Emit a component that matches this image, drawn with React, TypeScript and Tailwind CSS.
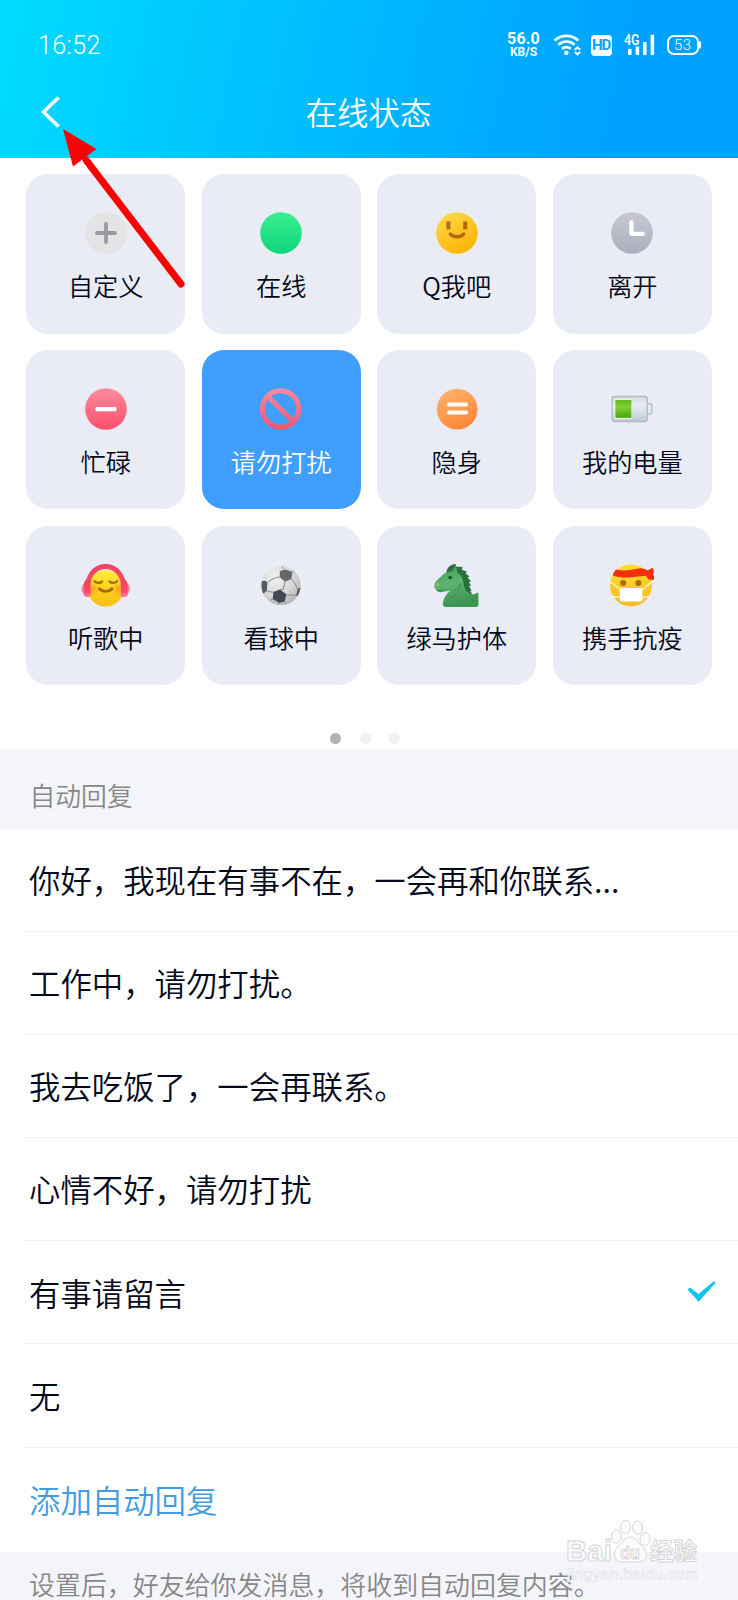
import React from 'react';

type Status = {
  label: string;
  icon: React.ReactNode;
  active?: boolean;
};

const AddIcon = () => (
  <svg width="48" height="48" viewBox="0 0 48 48">
    <circle cx="24" cy="24" r="21" fill="#e4e4e6" />
    <path d="M24 15v18M15 24h18" stroke="#9b9b9f" strokeWidth="3.8" strokeLinecap="round" />
  </svg>
);

const OnlineIcon = () => (
  <svg width="48" height="48" viewBox="0 0 48 48">
    <defs>
      <linearGradient id="online" x1="0" y1="0" x2="0" y2="1">
        <stop offset="0" stopColor="#38ee8e" />
        <stop offset="1" stopColor="#10d67c" />
      </linearGradient>
    </defs>
    <circle cx="24" cy="24" r="20.8" fill="url(#online)" />
  </svg>
);

const SmileIcon = () => (
  <svg width="48" height="48" viewBox="0 0 48 48">
    <defs>
      <linearGradient id="smile" x1="0.2" y1="0" x2="0.7" y2="1">
        <stop offset="0" stopColor="#ffd84a" />
        <stop offset="1" stopColor="#fdb300" />
      </linearGradient>
    </defs>
    <circle cx="24" cy="24" r="20.8" fill="url(#smile)" />
    <path d="M15.4 14.6v3.8M32.2 14.6v3.8" stroke="#b5690c" strokeWidth="4" strokeLinecap="square" />
    <path d="M17.4 25c3.4 3.600 10 3.600 13.400 0" fill="none" stroke="#b5690c" strokeWidth="3.4" strokeLinecap="round" />
  </svg>
);

const AwayIcon = () => (
  <svg width="48" height="48" viewBox="0 0 48 48">
    <defs>
      <linearGradient id="away" x1="0" y1="0" x2="0" y2="1">
        <stop offset="0" stopColor="#c6c7d3" />
        <stop offset="1" stopColor="#aeafbe" />
      </linearGradient>
    </defs>
    <circle cx="24" cy="24" r="20.8" fill="url(#away)" />
    <path d="M23.4 13v11.8h11.4" fill="none" stroke="#fff" strokeWidth="4.2" strokeLinecap="round" strokeLinejoin="round" />
  </svg>
);

const BusyIcon = () => (
  <svg width="48" height="48" viewBox="0 0 48 48">
    <defs>
      <linearGradient id="busy" x1="0" y1="0" x2="0" y2="1">
        <stop offset="0" stopColor="#ff8b9c" />
        <stop offset="1" stopColor="#fc4f6d" />
      </linearGradient>
    </defs>
    <circle cx="24" cy="24" r="20.8" fill="url(#busy)" />
    <rect x="13.5" y="22" width="21" height="4.2" rx="1" fill="#fff" />
  </svg>
);

const BlockIcon = () => (
  <svg width="48" height="48" viewBox="0 0 48 48">
    <defs>
      <linearGradient id="block" gradientUnits="userSpaceOnUse" x1="24" y1="3" x2="24" y2="45">
        <stop offset="0" stopColor="#f98d9f" />
        <stop offset="1" stopColor="#ef5473" />
      </linearGradient>
    </defs>
    <circle cx="23.6" cy="24" r="18.2" fill="none" stroke="url(#block)" strokeWidth="5" />
    <path d="M11 11.4l25.2 25.2" stroke="url(#block)" strokeWidth="5" />
  </svg>
);

const HiddenIcon = () => (
  <svg width="48" height="48" viewBox="0 0 48 48">
    <defs>
      <linearGradient id="hidden" x1="0.2" y1="0" x2="0.7" y2="1">
        <stop offset="0" stopColor="#ffb56b" />
        <stop offset="1" stopColor="#fc8436" />
      </linearGradient>
    </defs>
    <circle cx="24.2" cy="24.2" r="20.4" fill="url(#hidden)" />
    <path d="M16 19.6h17M16 27.6h17" stroke="#fff" strokeWidth="4" strokeLinecap="round" />
  </svg>
);

const PowerIcon = () => (
  <svg width="48" height="48" viewBox="0 0 48 48">
    <defs>
      <linearGradient id="shell" x1="0" y1="0" x2="0" y2="1">
        <stop offset="0" stopColor="#d3dbe0" />
        <stop offset="0.35" stopColor="#e6eef3" />
        <stop offset="1" stopColor="#bccad2" />
      </linearGradient>
      <linearGradient id="charge" x1="0" y1="0" x2="0" y2="1">
        <stop offset="0" stopColor="#5dbb1b" />
        <stop offset="0.4" stopColor="#83cf36" />
        <stop offset="1" stopColor="#43a60a" />
      </linearGradient>
    </defs>
    <rect x="38.600" y="18.600" width="5.400" height="10.600" rx="2.600" fill="#e4e8ed" stroke="#bcc1c6" strokeWidth="1.500" />
    <rect x="4" y="11.5" width="35.2" height="25" rx="2.6" fill="url(#shell)" stroke="#b1babf" strokeWidth="1.3" />
    <rect x="6.400" y="13.8" width="17.6" height="20.4" fill="#e8f3e2" />
    <rect x="7.400" y="15" width="16" height="17.8" fill="url(#charge)" />
  </svg>
);

const MusicIcon = () => (
  <svg width="52" height="48" viewBox="0 0 52 48">
    <defs>
      <linearGradient id="music" x1="0.5" y1="0" x2="0.5" y2="1">
        <stop offset="0" stopColor="#ffee3b" />
        <stop offset="0.65" stopColor="#fdc91a" />
        <stop offset="1" stopColor="#fbbf1a" />
      </linearGradient>
      <linearGradient id="phones" x1="0" y1="0" x2="0" y2="1">
        <stop offset="0" stopColor="#ee4260" />
        <stop offset="0.7" stopColor="#fb4a68" />
        <stop offset="1" stopColor="#ff8698" />
      </linearGradient>
      <radialGradient id="blush">
        <stop offset="0" stopColor="#ff8b20" stopOpacity="0.75" />
        <stop offset="1" stopColor="#ff8b20" stopOpacity="0" />
      </radialGradient>
    </defs>
    <circle cx="25.6" cy="27.400" r="18.2" fill="url(#music)" />
    <circle cx="12.5" cy="28" r="7" fill="url(#blush)" />
    <circle cx="39" cy="28" r="7" fill="url(#blush)" />
    <path d="M5 23C8 9 16 3 25.600 3S43.200 9 46.200 23l-5 1C39.500 13 33 8 25.600 8S11.700 13 10 24z" fill="url(#phones)" />
    <path d="M4 22.500c-1.800 1-2.600 3-2.600 5 0 2.300.8 4.300 2.400 5.600zM47.400 22.500c1.800 1 2.600 3 2.600 5 0 2.300-.8 4.300-2.400 5.600z" fill="#f68a9c" />
    <path d="M3.600 24c.5-3 1.800-5 3.300-5.400H10.600V36H7c-2 0-3.400-1-3.400-3zM47.800 24c-.5-3-1.800-5-3.300-5.400h-3.700V36h3.600c2 0 3.400-1 3.400-3z" fill="url(#phones)" />
    <path d="M14.500 20.200c2 2.200 5.800 2.200 7.600.2M29.500 20.400c1.800 2 5.600 2 7.600-.2" fill="none" stroke="#a8690b" strokeWidth="2.3" strokeLinecap="round" />
    <path d="M19.400 27.800c3 3.400 9.600 3.400 12.600 0" fill="none" stroke="#a8690b" strokeWidth="2.800" strokeLinecap="round" />
  </svg>
);

const BallIcon = () => (
  <svg width="48" height="48" viewBox="0 0 48 48">
    <defs>
      <radialGradient id="ball" cx="0.35" cy="0.3" r="0.75">
        <stop offset="0" stopColor="#f1f1f1" />
        <stop offset="0.6" stopColor="#d8d8d9" />
        <stop offset="1" stopColor="#b5b5b6" />
      </radialGradient>
      <clipPath id="ballClip">
        <circle cx="24" cy="24.600" r="19.600" />
      </clipPath>
    </defs>
    <circle cx="24" cy="24.600" r="19.600" fill="url(#ball)" />
    <g clipPath="url(#ballClip)">
      <path d="M22.800 10l5.600-1.600 7 2.400-1 7.200-6.400 2.800-5.200-4.600z" fill="#65686c" />
      <path d="M16.400 31l6.600-2.600 6.400 5.200-1.800 7-5.600 1.400-6.200-4z" fill="#434953" />
      <path d="M3 20.400l5.400-.6 2 2-.6 8-3 2.600-4-2zM44 26.600l-3.400 1.400-1.400 6.600 2.400.8 3-4z" fill="#555a60" />
      <path d="M10.400 21.400c4-3 7-5 12.400-5.400M28 20.800l-1.800 7.600-3.200.4M34.400 18.200c3 3 5 6 6 10M29.400 33.800l10 .6M9.800 29.800c1 .4 3 1 6.600 1.400M16 38l-3 1.400M27.600 40.400l2 4M21.600 42l-1 3" fill="none" stroke="#85878a" strokeWidth="1" />
    </g>
    <path d="M24.600 5l2.600 3.600M37 9.600l-2 2M16 42l2-2.600" stroke="#97999d" strokeWidth="1" />
  </svg>
);

const HorseIcon = () => (
  <svg width="48" height="48" viewBox="0 0 48 48">
    <defs>
      <linearGradient id="horse" x1="0" y1="0" x2="0.3" y2="1">
        <stop offset="0" stopColor="#3fa054" />
        <stop offset="0.5" stopColor="#5db370" />
        <stop offset="1" stopColor="#3b954f" />
      </linearGradient>
    </defs>
    <path d="M13 12.500C14 6.500 17.500 3 23 3l-.5 2.500L29.500 6l-.6 2.800 5 1.700-1.300 1.900 4 3.200-2.200.9 3.800 3.800-2.400.8 2.400 4.200-2.400-.4 2.800 4.600-1.400.5 2.200 3.500L33 36 21 21z" fill="#296f3c" />
    <path d="M18.600 10.400l3.600-5.400c1.800 2 2 4 1.700 6.200 4.600 3 6.100 6.300 6.600 10.800.8 6.500 4 11 9.500 11.400l5.400-2v12.200c0 1.600-.8 2.400-2.400 2.400H12.800c-2.200 0-3.200-1.200-3-3.200.5-5.500 3-9.500 7.200-13-3.500.5-5.400 1-8.400 1.400C4.400 31.500 1.400 28.500 1.400 24.800c0-3 1.600-4.800 4.400-7.200 3.600-3.400 6.200-7.400 12.800-7.200z" fill="url(#horse)" />
    <path d="M20 30.500c4-1.800 6.500-4.500 7-8 .6 6-2.500 10.500-9 13.800-3 1.600-4.800 5.200-5.600 9.400" fill="none" stroke="#2f8444" strokeWidth="1" opacity="0.500" />
    <ellipse cx="17.200" cy="16.600" rx="2" ry="1.700" fill="#165b29" />
    <ellipse cx="4.800" cy="23.600" rx="1.200" ry="1.700" fill="#a5c85c" />
    <path d="M4.500 29.500c2 .8 4 .4 5.500-.8" fill="none" stroke="#226e37" strokeWidth="1" />
  </svg>
);

const MaskIcon = () => (
  <svg width="48" height="48" viewBox="0 0 48 48">
    <defs>
      <linearGradient id="mask" x1="0" y1="0" x2="0" y2="1">
        <stop offset="0" stopColor="#fddd2e" />
        <stop offset="1" stopColor="#f8bb26" />
      </linearGradient>
    </defs>
    <circle cx="23" cy="24.400" r="21" fill="url(#mask)" />
    <path d="M4.800 14.500c.6-2.500 1.800-4.500 3.400-5.900C17 11 25 8 31 7.400c3.600-.4 6.400.6 8.600 2.200l4.800-2.800c2 2.400 2 4.600.8 6.400 1 2 1.300 3.800.4 6l-5-.8-2.800-3.600C27 15.500 16 18.500 4.800 14.500z" fill="#f32f10" />
    <path d="M1.500 20.200l12 9M45.500 19.500l-11.800 9.700M3 35.800l10 .4M43.400 35.200l-9.400 1.400" stroke="#fff6dc" strokeWidth="1.400" />
    <circle cx="15.200" cy="22" r="3" fill="#a86b08" />
    <circle cx="30.400" cy="22" r="3" fill="#a86b08" />
    <rect x="11.800" y="27" width="22.600" height="13.400" rx="1.600" fill="#fff" />
  </svg>
);

const statuses: Status[] = [
  { label: '自定义', icon: <AddIcon /> },
  { label: '在线', icon: <OnlineIcon /> },
  { label: 'Q我吧', icon: <SmileIcon /> },
  { label: '离开', icon: <AwayIcon /> },
  { label: '忙碌', icon: <BusyIcon /> },
  { label: '请勿打扰', icon: <BlockIcon />, active: true },
  { label: '隐身', icon: <HiddenIcon /> },
  { label: '我的电量', icon: <PowerIcon /> },
  { label: '听歌中', icon: <MusicIcon /> },
  { label: '看球中', icon: <BallIcon /> },
  { label: '绿马护体', icon: <HorseIcon /> },
  { label: '携手抗疫', icon: <MaskIcon /> },
];

const replies = [
  '你好，我现在有事不在，一会再和你联系...',
  '工作中，请勿打扰。',
  '我去吃饭了，一会再联系。',
  '心情不好，请勿打扰',
  '有事请留言',
  '无',
];

const StatusBar = () => (
  <div className="flex h-[90px] items-center pl-[38px] pr-[37px] text-white">
    <span className="font-[Roboto] text-[25px] leading-none tracking-[0.4px]">16:52</span>
    <div className="ml-auto flex items-center">
      <div className="flex w-[34px] flex-col items-center font-[Roboto] font-bold">
        <span className="text-[16px] leading-[14px] tracking-[0.2px]">56.0</span>
        <span className="text-[12px] leading-[12px]">KB/S</span>
      </div>
      <svg className="ml-[12px]" width="28" height="22" viewBox="0 0 28 22" fill="none" stroke="#fff" strokeWidth="2.800">
        <path d="M1.500 6.500c7-6.200 16.800-6.200 23.800 0M5.200 10.800c5-4.200 11.400-4.200 16.400 0M9 14.800c2.800-2.200 6-2.200 8.800 0" />
        <circle cx="13.400" cy="18.800" r="2.200" fill="#fff" stroke="none" />
        <path d="M21.800 15.800l2.700-2.600 2.700 2.600M21.800 17.800l2.700 2.600 2.700-2.600" strokeWidth="1.900" />
      </svg>
      <div className="ml-[10px] flex size-[21px] items-center justify-center rounded-[4px] bg-white">
        <span className="font-[Roboto] text-[15px] font-bold leading-none tracking-[-1.200px] text-[#00a6fb]">HD</span>
      </div>
      <svg className="ml-[12px]" width="31" height="22" viewBox="0 0 31 22" fill="#fff">
        <text x="0" y="10.800" fontSize="14" fontWeight="500" fontFamily="Roboto, sans-serif" textLength="15.500" lengthAdjust="spacingAndGlyphs">4G</text>
        <rect x="4" y="14.800" width="3.600" height="6.200" rx="0.800" />
        <rect x="11.600" y="12.600" width="3.600" height="8.400" rx="0.800" />
        <rect x="19" y="8" width="3.600" height="13" rx="0.800" />
        <rect x="26.600" y="0.800" width="3.600" height="20.200" rx="0.800" />
      </svg>
      <div className="ml-[12px] flex items-center">
        <div className="flex h-[20px] w-[32.500px] items-center justify-center rounded-[7px] border-2 border-white font-[Roboto] text-[15px] leading-none tracking-[0.4px]">
          53
        </div>
        <div className="h-[8px] w-[2px] rounded-r-full bg-white" />
      </div>
    </div>
  </div>
);

const TitleBar = () => (
  <div className="flex h-[68px] items-center px-[40px] pb-[24px]">
    <svg width="22" height="34" viewBox="0 0 22 34" fill="none" stroke="#fff" strokeWidth="3.600">
      <path d="M18.600 2.500L3.500 17l15.100 14.500" />
    </svg>
    <h1 className="flex-1 pr-[23px] text-center text-[31.400px] leading-none text-white">在线状态</h1>
  </div>
);

const StatusCard = ({ label, icon, active }: Status) => (
  <div
    className={
      'flex h-[159.300px] flex-col items-center rounded-[22px] pt-[35px] ' +
      (active ? 'bg-[#409eff] text-white' : 'bg-[#e9ecf4] text-[#03081a]')
    }
  >
    {icon}
    <span className="mt-[10px] text-[25.200px] leading-[36px]">{label}</span>
  </div>
);

const Pointer = () => (
  <svg className="pointer-events-none absolute left-[56px] top-[120px]" width="136" height="174" viewBox="56 120 136 174">
    <path d="M86 160L181 284" stroke="#fe0000" strokeWidth="7" strokeLinecap="round" />
    <path d="M63 129l33.500 20L73 166.500z" fill="#fe0000" />
  </svg>
);

const Watermark = () => (
  <svg
    className="pointer-events-none absolute left-[560px] top-[1515px]"
    width="150"
    height="72"
    viewBox="560 1515 150 72"
    fill="#fcfcfd"
    stroke="#d5d5d8"
    strokeWidth="1"
  >
    <text x="566" y="1561" fontSize="29" fontWeight="700" fontFamily="Liberation Sans, sans-serif" textLength="46" lengthAdjust="spacingAndGlyphs">Bai</text>
    <ellipse cx="616.500" cy="1536.500" rx="5" ry="6.600" />
    <ellipse cx="625.600" cy="1527" rx="5" ry="6.600" />
    <ellipse cx="637.600" cy="1527.600" rx="5" ry="6.600" />
    <ellipse cx="645" cy="1539" rx="5" ry="6.600" />
    <path d="M630.500 1537c4.500 0 7.500 3.800 9.500 7 3 4 7 5.500 6.500 11-.5 5-4.500 7-8.500 7-5 0-10-.5-15 0-4.500 0-8.500-2-8.500-7.500s4-7.500 6.500-11c2.500-3.500 5-6.500 9.500-6.500z" />
    <text x="620" y="1559" fontSize="19" fontWeight="700" fontFamily="Liberation Sans, sans-serif" textLength="20" lengthAdjust="spacingAndGlyphs">du</text>
    <text x="650" y="1560" fontSize="23.500" fontWeight="700" fontFamily="Noto Sans CJK SC, sans-serif">经验</text>
    <text x="567" y="1579" fontSize="15.500" stroke="#e1e2e5" strokeWidth="0.600" fontFamily="Liberation Sans, sans-serif" textLength="131" lengthAdjust="spacing">jingyan.baidu.com</text>
  </svg>
);

export default function App() {
  return (
    <div className="relative h-[1600px] w-[738px] overflow-hidden bg-white font-['Noto_Sans_CJK_SC',sans-serif] font-[350]">
      <header className="h-[158px] bg-[linear-gradient(102deg,#00dcff_0%,#00c4ff_32%,#00b0ff_60%,#00a2ff_82%,#00a1ff_100%)]">
        <StatusBar />
        <TitleBar />
      </header>

      <section className="flex h-[591px] flex-col px-[26px] pt-[16.300px]">
        <div className="grid grid-cols-4 gap-x-[16.200px] gap-y-[16.400px]">
          {statuses.map((s) => (
            <StatusCard key={s.label} {...s} />
          ))}
        </div>
        <div className="mt-[47.700px] flex justify-center gap-[18.500px] pr-[8px]">
          <span className="size-[11px] rounded-full bg-[#b0b2ba]" />
          <span className="size-[11px] rounded-full bg-[#f0f0f1]" />
          <span className="size-[11px] rounded-full bg-[#f0f0f1]" />
        </div>
      </section>

      <h2 className="h-[79.500px] bg-[#f4f5fa] pl-[29.500px] pt-[28px] text-[25.800px] leading-[36px] text-[#878787]">自动回复</h2>

      <ul className="text-[31.400px] text-[#03081a]">
        {replies.map((text) => (
          <li key={text} className="pl-[22px]">
            <div className="flex h-[103.200px] items-center border-b border-[#f3f3f5] pl-[7px] pr-[22px]">
              <span className="flex-1 leading-none">{text}</span>
              {text === '有事请留言' && (
                <svg width="29" height="22" viewBox="0 0 29 22" fill="#12c3ee">
                  <path d="M.6 8.400l2.400-1.800 8.400 6.400L26.800.2l1.800 1.600L11.600 20.800z" />
                </svg>
              )}
            </div>
          </li>
        ))}
        <li className="flex h-[104.300px] items-center pb-[1px] pl-[29px] leading-none text-[#429ce3]">添加自动回复</li>
      </ul>

      <footer className="h-[60px] whitespace-nowrap bg-[#f4f5fa] pl-[29px] pt-[14px] text-[25.950px] leading-[36px] text-[#878787]">
        设置后，好友给你发消息，将收到自动回复内容。
      </footer>

      <Pointer />
      <Watermark />
    </div>
  );
}
